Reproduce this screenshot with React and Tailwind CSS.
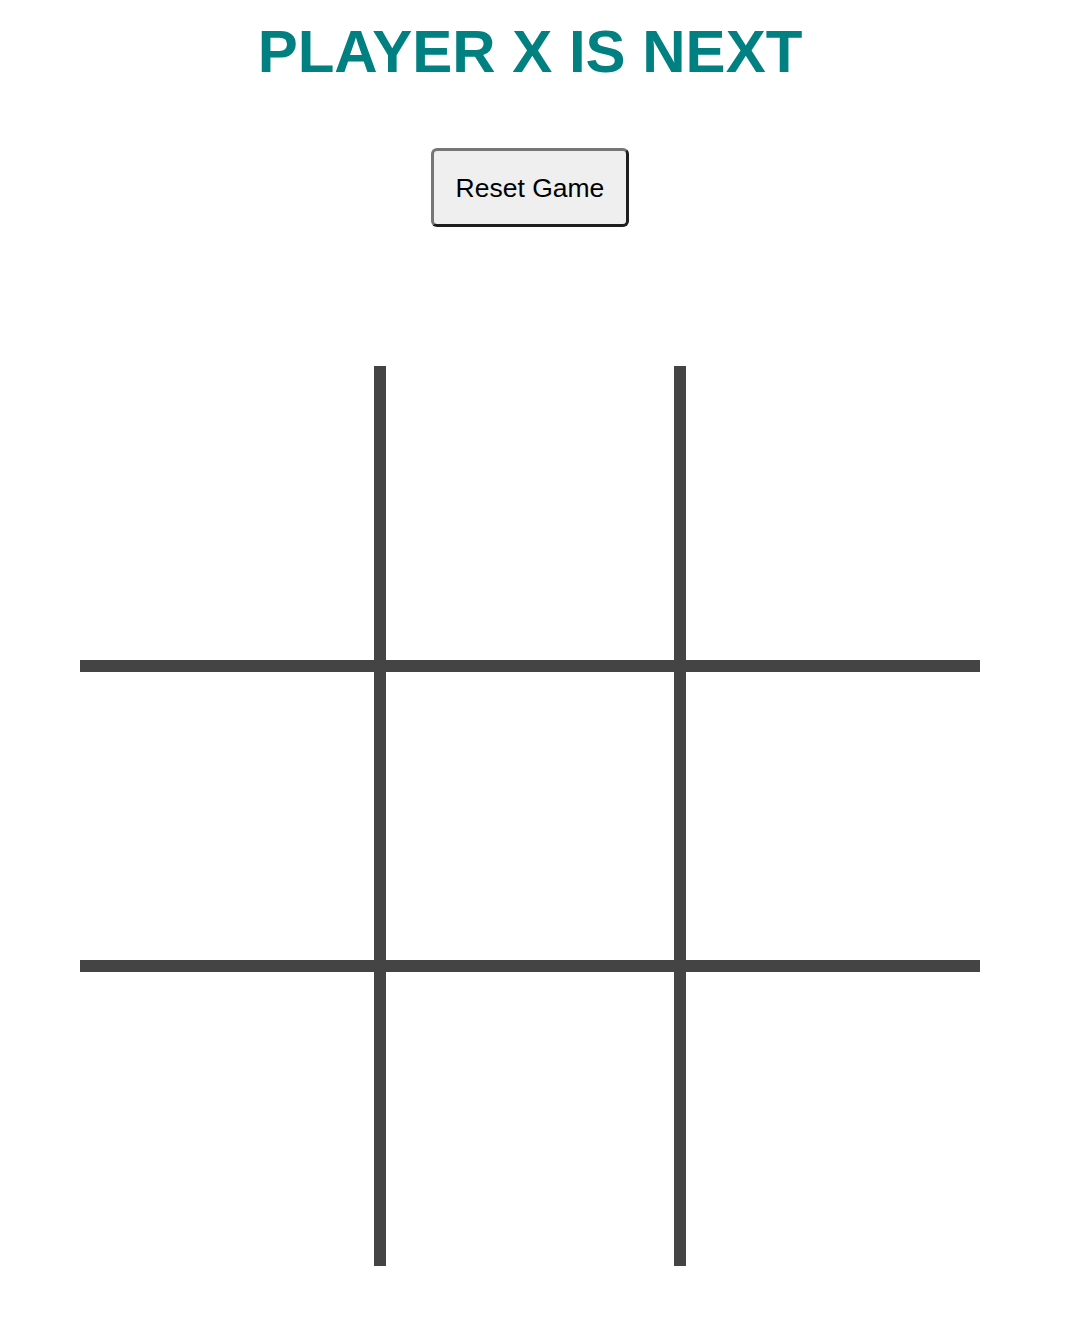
import React, { useState } from "react";

const cellBorders = [
  "border-r-[6px] border-b-[6px]",
  "border-l-[6px] border-r-[6px] border-b-[6px]",
  "border-l-[6px] border-b-[6px]",
  "border-t-[6px] border-r-[6px] border-b-[6px]",
  "border-[6px]",
  "border-t-[6px] border-l-[6px] border-b-[6px]",
  "border-t-[6px] border-r-[6px]",
  "border-t-[6px] border-l-[6px] border-r-[6px]",
  "border-t-[6px] border-l-[6px]",
];

export default function App() {
  const [squares, setSquares] = useState(Array(9).fill(null));
  const [xNext, setXNext] = useState(true);

  const handleClick = (i) => {
    if (squares[i]) return;
    const next = squares.slice();
    next[i] = xNext ? "X" : "O";
    setSquares(next);
    setXNext(!xNext);
  };

  const reset = () => {
    setSquares(Array(9).fill(null));
    setXNext(true);
  };

  return (
    <div className="w-[1060px] bg-white font-['Liberation_Sans',Arial,sans-serif] pb-[60px]">
      <div className="flex flex-col items-center">
        <h1 className="mt-[22px] text-[60px] leading-[60px] font-bold text-[#008080]">
          PLAYER {xNext ? "X" : "O"} IS NEXT
        </h1>
        <button
          onClick={reset}
          className="mt-[66px] w-[198px] h-[79px] rounded-[6px] border-[3px] border-solid border-t-[#767676] border-l-[#767676] border-r-[#1e1e1e] border-b-[#1e1e1e] bg-[#efefef] text-[26.5px] leading-[30px] text-black"
        >
          Reset Game
        </button>
        <div className="mt-[139px] grid grid-cols-3 w-[900px]">
          {squares.map((val, i) => (
            <div
              key={i}
              onClick={() => handleClick(i)}
              className={
                "h-[300px] w-[300px] border-solid border-[#444444] flex items-center justify-center text-[120px] font-bold text-[#444444] " +
                cellBorders[i]
              }
            >
              {val}
            </div>
          ))}
        </div>
      </div>
    </div>
  );
}
